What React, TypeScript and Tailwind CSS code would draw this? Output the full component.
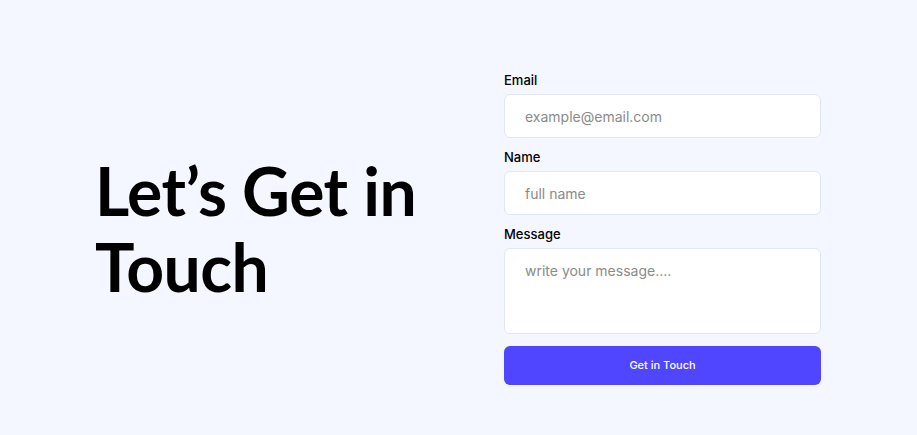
export default function App() {
  return (
    <div className="min-h-[435px] w-full bg-[#f4f7ff] flex items-center justify-between pl-[95px] pr-[96px] pt-[20px] font-['Inter',sans-serif]">
      <h1 className="text-[66px] leading-[76px] font-bold tracking-[-0.5px] text-black font-['Lato',sans-serif] mt-[3px]">
        Let’s Get in
        <br />
        Touch
      </h1>

      <form className="w-[317px] flex flex-col" onSubmit={(e) => e.preventDefault()}>
        <label className="text-[13px] leading-5 font-medium text-black mb-1">Email</label>
        <input
          type="email"
          placeholder="example@email.com"
          className="h-[44px] rounded-md border border-[#e3e6f5] bg-white px-5 text-sm text-black placeholder:text-[#8a8a8a] outline-none"
        />

        <label className="text-[13px] leading-5 font-medium text-black mb-1 mt-[9px]">Name</label>
        <input
          type="text"
          placeholder="full name"
          className="h-[44px] rounded-md border border-[#e3e6f5] bg-white px-5 text-sm text-black placeholder:text-[#8a8a8a] outline-none"
        />

        <label className="text-[13px] leading-5 font-medium text-black mb-1 mt-[9px]">Message</label>
        <textarea
          placeholder="write your message...."
          className="h-[86px] resize-none rounded-md border border-[#e3e6f5] bg-white px-5 pt-[12px] text-sm text-black placeholder:text-[#8a8a8a] outline-none"
        />

        <button
          type="submit"
          className="mt-[12px] h-[39px] rounded-md bg-[#5046ff] text-[11px] font-medium text-white"
        >
          Get in Touch
        </button>
      </form>
    </div>
  );
}
